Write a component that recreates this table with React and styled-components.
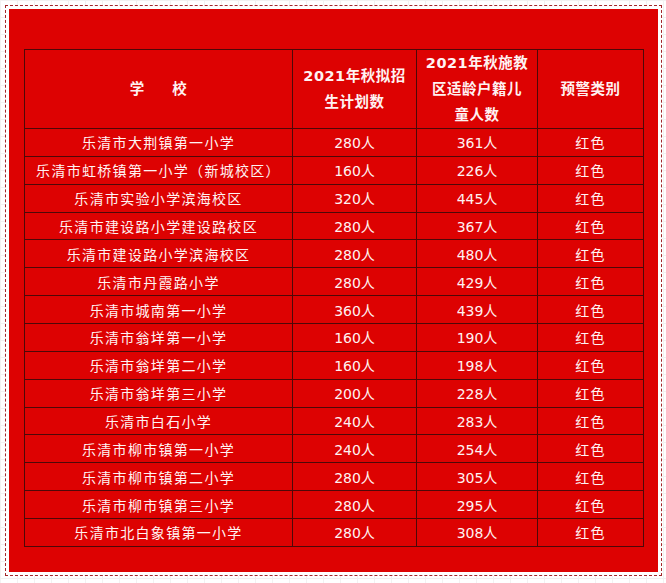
import React from 'react';
import styled, { createGlobalStyle } from 'styled-components';

const rows = [
  ['乐清市大荆镇第一小学', '280人', '361人'],
  ['乐清市虹桥镇第一小学（新城校区）', '160人', '226人'],
  ['乐清市实验小学滨海校区', '320人', '445人'],
  ['乐清市建设路小学建设路校区', '280人', '367人'],
  ['乐清市建设路小学滨海校区', '280人', '480人'],
  ['乐清市丹霞路小学', '280人', '429人'],
  ['乐清市城南第一小学', '360人', '439人'],
  ['乐清市翁垟第一小学', '160人', '190人'],
  ['乐清市翁垟第二小学', '160人', '198人'],
  ['乐清市翁垟第三小学', '200人', '228人'],
  ['乐清市白石小学', '240人', '283人'],
  ['乐清市柳市镇第一小学', '240人', '254人'],
  ['乐清市柳市镇第二小学', '280人', '305人'],
  ['乐清市柳市镇第三小学', '280人', '295人'],
  ['乐清市北白象镇第一小学', '280人', '308人'],
];

const GlobalStyle = createGlobalStyle`
  body {
    margin: 0;
    background-color: #fff;
    background-image:
      linear-gradient(to right, #f2f2f2 1px, transparent 1px),
      linear-gradient(to bottom, #f2f2f2 1px, transparent 1px);
    background-size: 17px 17px;
    font-family: "Noto Sans CJK SC", "Noto Sans", sans-serif;
  }
`;

const Frame = styled.div`
  margin: 5px;
  width: 649px;
  padding: 3px;
  border: 1px dashed #a3262a;
  background: #fff;
`;

const Panel = styled.div`
  background: #dd0202;
  height: 563px;
  box-sizing: border-box;
  padding: 40px 15px 0;
`;

const Table = styled.table`
  width: 619px;
  border-collapse: collapse;
  table-layout: fixed;
  color: #fff2f2;
`;

const Head = styled.th`
  border: 1px solid #4e0808;
  height: 78px;
  padding: 0;
  font-size: 14.5px;
  font-weight: 700;
  line-height: 26px;
  text-align: center;
  font-family: "DejaVu Sans", "Noto Sans CJK SC", sans-serif;
  letter-spacing: 0.5px;
  white-space: nowrap;
`;

const Cell = styled.td`
  border: 1px solid #4e0808;
  height: 26.87px;
  padding: 0;
  text-align: center;
  font-size: 14px;
  letter-spacing: ${p => (p.$num ? '0' : '1.3px')};
  font-family: ${p =>
    p.$num ? '"DejaVu Sans", "Noto Sans CJK SC", sans-serif' : '"Noto Sans CJK SC", sans-serif'};
  font-weight: 400;
  white-space: nowrap;
`;

export default function App() {
  return (
    <>
      <GlobalStyle />
      <Frame>
        <Panel>
          <Table>
            <colgroup>
              <col style={{ width: 268 }} />
              <col style={{ width: 124 }} />
              <col style={{ width: 121 }} />
              <col style={{ width: 106 }} />
            </colgroup>
            <thead>
              <tr>
                <Head>学&nbsp;&nbsp;&nbsp;&nbsp;&nbsp;校</Head>
                <Head>
                  2021年秋拟招
                  <br />
                  生计划数
                </Head>
                <Head>
                  2021年秋施教
                  <br />
                  区适龄户籍儿
                  <br />
                  童人数
                </Head>
                <Head>预警类别</Head>
              </tr>
            </thead>
            <tbody>
              {rows.map(([name, plan, kids]) => (
                <tr key={name}>
                  <Cell>{name}</Cell>
                  <Cell $num>{plan}</Cell>
                  <Cell $num>{kids}</Cell>
                  <Cell>红色</Cell>
                </tr>
              ))}
            </tbody>
          </Table>
        </Panel>
      </Frame>
    </>
  );
}
